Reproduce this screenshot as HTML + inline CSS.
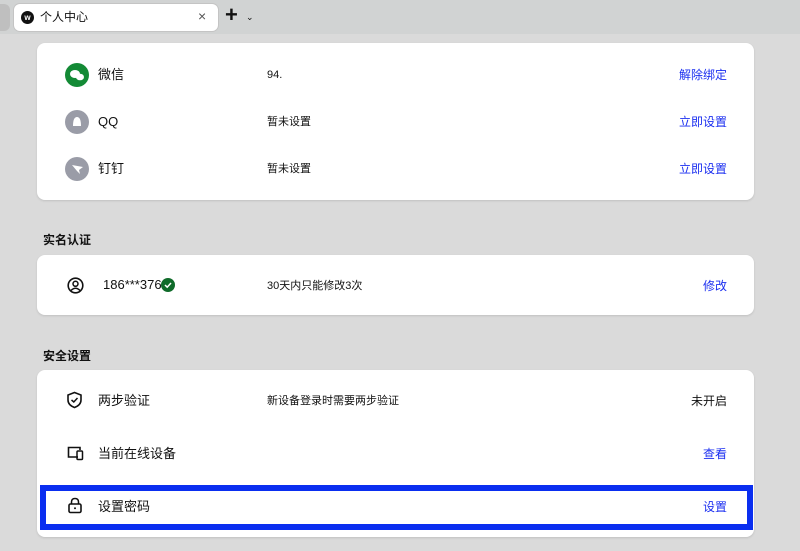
<!DOCTYPE html>
<html><head><meta charset="utf-8">
<style>
*{margin:0;padding:0;box-sizing:border-box}
body{width:800px;height:551px;overflow:hidden;background:#dadada;font-family:"Liberation Sans","Noto Sans CJK SC",sans-serif;color:#111;position:relative}
.tabbar{position:absolute;left:0;top:0;width:800px;height:34px;background:#d1d3d3}
.tab{position:absolute;left:14px;top:4px;width:204px;height:27px;background:#fff;border-radius:6px;box-shadow:0 0 0 1px #c4c4c4}
.tabl{position:absolute;left:0;top:4px;width:10px;height:27px;background:#bfbfbf;border-radius:0 6px 6px 0}
.card{position:absolute;left:37px;width:717px;background:#fff;border-radius:8px;box-shadow:0 1px 2px rgba(0,0,0,.12)}
.t{position:absolute;font-size:12px;line-height:14px;white-space:nowrap}
.n{font-size:13px}
.s{font-size:11px}
.a{color:#1b2ff0;right:27px}
.h{position:absolute;left:43px;font-size:12px;font-weight:bold}
.ic{position:absolute;width:24px;height:24px;border-radius:50%;left:28px}
</style></head><body>
<div class="tabbar"></div>
<div class="tabl"></div>
<div class="tab">
 <div style="position:absolute;left:7px;top:7px;width:13px;height:13px;border-radius:50%;background:#111;color:#fff;font-size:8px;line-height:13px;text-align:center;font-weight:bold">w</div>
 <div class="t" style="left:26px;top:6px;font-size:12px">个人中心</div>
 <div class="t" style="left:184px;top:5px;font-size:14px;color:#555">×</div>
</div>
<div class="t" style="left:225px;top:4px;font-size:22px;line-height:22px;font-weight:bold">+</div>
<div class="t" style="left:246px;top:10px;font-size:9px">&#8964;</div>

<div class="card" style="top:43px;height:157px">
 <div class="ic" style="top:20px;background:#138a35"><svg width="24" height="24"><ellipse cx="10" cy="11" rx="5" ry="4" fill="#fff"/><ellipse cx="15" cy="14" rx="4" ry="3.3" fill="#fff"/></svg></div>
 <div class="t n" style="left:61px;top:25px">微信</div>
 <div class="t s" style="left:230px;top:25px">94.</div>
 <div class="t a" style="top:25px">解除绑定</div>

 <div class="ic" style="top:67px;background:#9a9ca7"><svg width="24" height="24"><path d="M8 16 Q8 7 12 7 Q16 7 16 16 Z" fill="#fff"/></svg></div>
 <div class="t n" style="left:61px;top:72px">QQ</div>
 <div class="t s" style="left:230px;top:72px">暂未设置</div>
 <div class="t a" style="top:72px">立即设置</div>

 <div class="ic" style="top:114px;background:#9a9ca7"><svg width="24" height="24"><path d="M7 8 L18 10 L14 13 L15 17 L12 14 Z" fill="#fff"/></svg></div>
 <div class="t n" style="left:61px;top:119px">钉钉</div>
 <div class="t s" style="left:230px;top:119px">暂未设置</div>
 <div class="t a" style="top:119px">立即设置</div>
</div>

<div class="h" style="top:231px">实名认证</div>
<div class="card" style="top:255px;height:60px">
 <svg style="position:absolute;left:30px;top:22px" width="17" height="17"><circle cx="8.5" cy="8.5" r="7.3" fill="none" stroke="#111" stroke-width="1.6"/><circle cx="8.5" cy="6.8" r="2.5" fill="none" stroke="#111" stroke-width="1.5"/><path d="M4 13.5 Q8.5 9 13 13.5" fill="none" stroke="#111" stroke-width="1.5"/></svg>
 <div class="t n" style="left:66px;top:23px">186***376</div>
 <svg style="position:absolute;left:124px;top:23px" width="14" height="14"><circle cx="7" cy="7" r="7" fill="#0f6b2a"/><path d="M4 7 L6.2 9.2 L10 5" fill="none" stroke="#fff" stroke-width="1.5"/></svg>
 <div class="t s" style="left:230px;top:24px">30天内只能修改3次</div>
 <div class="t a" style="top:24px">修改</div>
</div>

<div class="h" style="top:347px">安全设置</div>
<div class="card" style="top:370px;height:167px">
 <svg style="position:absolute;left:29px;top:21px" width="17" height="18"><path d="M8.5 1.5 L15 4 V9 Q15 14 8.5 16.5 Q2 14 2 9 V4 Z" fill="none" stroke="#111" stroke-width="1.6"/><path d="M5.5 9 L7.8 11 L11.5 7" fill="none" stroke="#111" stroke-width="1.5"/></svg>
 <div class="t n" style="left:61px;top:24px">两步验证</div>
 <div class="t s" style="left:230px;top:24px">新设备登录时需要两步验证</div>
 <div class="t" style="right:27px;top:24px;color:#111">未开启</div>

 <svg style="position:absolute;left:29px;top:75px" width="18" height="16"><path d="M12 12 H2.5 V2.5 H14 V5" fill="none" stroke="#111" stroke-width="1.6"/><rect x="11" y="6" width="5.5" height="8.5" rx="1" fill="none" stroke="#111" stroke-width="1.5"/></svg>
 <div class="t n" style="left:61px;top:77px">当前在线设备</div>
 <div class="t a" style="top:77px">查看</div>

 <svg style="position:absolute;left:30px;top:127px" width="16" height="17"><rect x="2" y="7" width="12" height="8.5" rx="1.5" fill="none" stroke="#111" stroke-width="1.6"/><path d="M4.5 7 V5 Q4.5 1.5 8 1.5 Q11.5 1.5 11.5 5 V7" fill="none" stroke="#111" stroke-width="1.5"/><circle cx="8" cy="11.2" r="1" fill="#111"/></svg>
 <div class="t n" style="left:61px;top:130px">设置密码</div>
 <div class="t a" style="top:130px">设置</div>
</div>
<div style="position:absolute;left:40px;top:485px;width:713px;height:45px;border:6px solid #0a2ef0"></div>
</body></html>
